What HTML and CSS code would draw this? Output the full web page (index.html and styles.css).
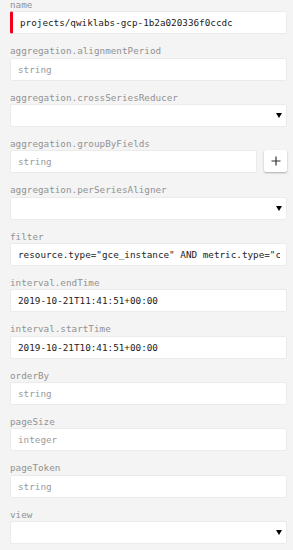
FILE: index.html
```html
<!DOCTYPE html>
<html>
  <head>
    <title>timeSeries.list</title>
    <link rel="stylesheet" href="styles.css">
  </head>
  <body>
    <form class="params">
      <div class="field">
        <label>name</label>
        <input class="box required" type="text" value="projects/qwiklabs-gcp-1b2a020336f0ccdc" />
      </div>
      <div class="field">
        <label>aggregation.alignmentPeriod</label>
        <input class="box" type="text" placeholder="string" />
      </div>
      <div class="field">
        <label>aggregation.crossSeriesReducer</label>
        <div class="box select"><span class="arrow"></span></div>
      </div>
      <div class="field">
        <label>aggregation.groupByFields</label>
        <div class="row">
          <input class="box" type="text" placeholder="string" />
          <button type="button" class="add">
            <svg width="10" height="10" viewBox="0 0 10 10">
              <path d="M5 0.5V9.5M0.5 5H9.5" stroke="#333" stroke-width="1.2" />
            </svg>
          </button>
        </div>
      </div>
      <div class="field">
        <label>aggregation.perSeriesAligner</label>
        <div class="box select"><span class="arrow"></span></div>
      </div>
      <div class="field">
        <label>filter</label>
        <input class="box" type="text" value='resource.type="gce_instance" AND metric.type="compute.googleapis.com/instance/cpu/utilization"' />
      </div>
      <div class="field">
        <label>interval.endTime</label>
        <input class="box" type="text" value="2019-10-21T11:41:51+00:00" />
      </div>
      <div class="field">
        <label>interval.startTime</label>
        <input class="box" type="text" value="2019-10-21T10:41:51+00:00" />
      </div>
      <div class="field">
        <label>orderBy</label>
        <input class="box" type="text" placeholder="string" />
      </div>
      <div class="field">
        <label>pageSize</label>
        <input class="box" type="text" placeholder="integer" />
      </div>
      <div class="field">
        <label>pageToken</label>
        <input class="box" type="text" placeholder="string" />
      </div>
      <div class="field">
        <label>view</label>
        <div class="box select"><span class="arrow"></span></div>
      </div>
    </form>
  </body>
</html>
```

FILE: styles.css
```css
body {
  margin: 0;
  background-color: #f4f4f4;
  font-family: "DejaVu Sans Mono", "Liberation Mono", monospace;
}
.params {
  margin-top: -1px;
  padding: 0 6px 0 10px;
}
.field {
  margin-bottom: 11px;
}
.field label {
  display: block;
  font-size: 9.3px;
  line-height: 12.33px;
  color: #929292;
}
.box {
  display: block;
  box-sizing: border-box;
  width: 100%;
  height: 23px;
  margin: 0;
  padding: 0 6px 0 7px;
  border: 1px solid #ebebeb;
  border-radius: 2px;
  background-color: #fff;
  font-family: inherit;
  font-size: 9.3px;
  color: #222;
  outline: none;
}
.box::placeholder {
  color: #9a9a9a;
}
.required {
  border-left: 3px solid #f0001c;
  padding-left: 7px;
}
.select {
  display: flex;
  align-items: center;
  justify-content: flex-end;
  padding-right: 4px;
}
.arrow {
  width: 0;
  height: 0;
  border-left: 3px solid transparent;
  border-right: 3px solid transparent;
  border-top: 5px solid #000;
}
.row {
  display: flex;
  gap: 7px;
}
.row .box {
  flex: 1;
  width: auto;
}
.add {
  flex: none;
  width: 23px;
  height: 22px;
  padding: 0;
  border: none;
  border-radius: 2px;
  background-color: #fff;
  box-shadow: 0 1px 2px rgba(0, 0, 0, 0.3);
  display: flex;
  align-items: center;
  justify-content: center;
  cursor: pointer;
}
```
